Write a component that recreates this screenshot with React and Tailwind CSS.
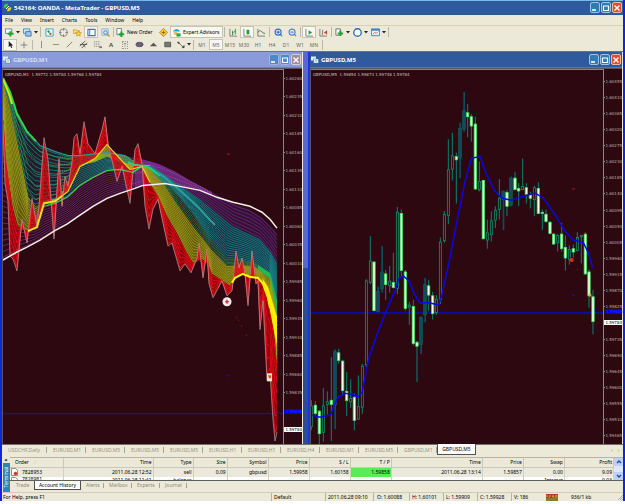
import React from "react";
import { Plus, Crosshair, Star, ZoomIn, ZoomOut, Clock } from "lucide-react";

/* ---------- curve helpers ---------- */
const at = (pts, x) => {
  if (x <= pts[0][0]) return pts[0][1];
  for (let i = 1; i < pts.length; i++) {
    if (x <= pts[i][0]) {
      const [x0, y0] = pts[i - 1];
      const [x1, y1] = pts[i];
      return y0 + ((y1 - y0) * (x - x0)) / (x1 - x0);
    }
  }
  return pts[pts.length - 1][1];
};
const blend = (a, b, t, from, to) => {
  const out = [];
  for (let x = from; x <= to; x++) {
    out.push(`${x},${(at(a, x) * (1 - t) + at(b, x) * t).toFixed(1)}`);
  }
  return out.join(" ");
};
const area = (a, b, from, to) =>
  blend(a, a, 0, from, to) + " " + blend(b, b, 0, from, to).split(" ").reverse().join(" ");
const line = (pts) => pts.map((p) => p.join(",")).join(" ");

/* ---------- M1 data ---------- */
const PRICE = [[3,122],[5,182],[8,200],[10,255],[13,258],[17,270],[22,218],[27,242],[32,197],[37,225],[39,205],[44,136],[48,158],[54,238],[59,157],[62,205],[65,175],[68,185],[72,160],[74,136],[77,132],[80,152],[84,120],[88,142],[95,152],[99,138],[102,128],[105,115],[108,142],[117,180],[122,165],[130,202],[135,148],[138,142],[142,162],[145,205],[149,228],[153,208],[158,198],[163,222],[168,245],[172,242],[180,270],[185,263],[191,272],[197,257],[199,242],[203,277],[207,248],[209,283],[213,297],[222,280],[227,295],[232,290],[236,250],[239,267],[242,257],[245,273],[248,305],[252,250],[256,283],[258,280],[260,329],[263,300],[267,380],[270,373],[273,420],[275,441],[277,432]];
const YELLOW = [[3,118],[6,160],[9,182],[13,208],[18,226],[28,230],[37,226],[44,202],[55,200],[68,190],[80,165],[95,157],[107,143],[118,155],[130,168],[142,165],[152,185],[158,195],[167,215],[177,232],[187,252],[193,262],[202,258],[208,263],[212,273],[220,278],[230,285],[235,277],[243,273],[250,276],[258,277],[263,283],[268,297],[272,317],[275,340],[277,365]];
const GREEN = [[3,80],[8,98],[14,125],[20,155],[28,195],[36,205],[44,200],[55,198],[68,184],[80,163],[95,160],[107,155],[125,162],[140,163],[150,168],[163,182],[175,200],[193,225],[210,247],[227,265],[240,264],[255,266],[270,278],[277,315]];
const TOP = [[3,76],[10,90],[17,112],[27,130],[40,144],[55,150],[68,154],[80,154],[107,151],[125,154],[140,163],[150,168],[165,180],[180,196],[195,215],[210,238],[227,258],[240,258],[255,262],[270,272],[277,300]];
const TEAL = [[3,185],[20,198],[35,210],[44,205],[55,202],[67,196],[80,184],[93,176],[107,169],[120,168],[133,171],[143,164],[150,164],[162,172],[175,181],[200,198],[217,212],[233,225],[260,238],[270,250],[277,262]];
const UPPER = [[118,153],[135,156],[150,160],[160,163],[175,170],[190,179],[205,187],[220,195],[235,203],[250,208],[262,216],[270,224],[277,232]];
const WHITE = [[3,259],[17,251],[27,246],[40,239],[54,230],[67,223],[80,214],[93,205],[107,197],[120,192],[135,187],[143,184],[165,182],[180,185],[200,189],[217,196],[233,201],[250,205],[262,211],[270,218],[277,227]];

function Band({ a, b, n, color, from = 3, to = 277, width = 0.8, dash }) {
  return (
    <g stroke={color} strokeWidth={width} strokeDasharray={dash} fill="none">
      {Array.from({ length: n }, (_, i) => (
        <polyline key={i} points={blend(a, b, (i + 0.5) / n, from, to)} />
      ))}
    </g>
  );
}

function RainbowPlot() {
  return (
    <svg viewBox="3 68 280 376" preserveAspectRatio="none" className="block h-full w-full">
      <rect x="3" y="413" width="280" height="1" fill="#23204e" />
      <Band a={TEAL} b={WHITE} n={13} color="#6a2c7c" to={165} width={0.8} />
      <polygon points={area(UPPER, TEAL, 150, 277)} fill="#401650" opacity="0.55" />
      <Band a={UPPER} b={TEAL} n={7} color="#70308a" from={118} width={0.7} />
      <polygon points={area(UPPER, WHITE, 135, 212)} fill="#8a3a9c" opacity="0.45" />
      <Band a={UPPER} b={WHITE} n={3} color="#a044b0" from={125} to={212} width={0.8} dash="1.5 1" />
      <polygon points={area(TOP, TEAL, 150, 277)} fill="#0c4456" opacity="0.7" />
      <polygon points={area(TOP, TEAL, 20, 150)} fill="#0c4650" opacity="0.35" />
      <Band a={TOP} b={TEAL} n={15} color="#1d8088" width={0.8} />
      <Band a={TOP} b={GREEN} n={5} color="#25a060" width={0.7} />
      <polygon points={area(TOP, GREEN, 258, 277)} fill="#20b858" />
      <polygon points={area(YELLOW, GREEN, 3, 30)} fill="#707008" opacity="0.75" />
      <polygon points={area(YELLOW, GREEN, 142, 277)} fill="#7c7c0c" opacity="0.7" />
      <Band a={YELLOW} b={GREEN} n={12} color="#a9a81a" width={0.7} />
      <Band a={YELLOW} b={TOP} n={6} color="#c08a28" from={60} to={145} width={0.7} dash="1 1" />
      <polygon points={area(PRICE, YELLOW, 3, 277)} fill="#c40008" opacity="0.68" />
      <Band a={PRICE} b={YELLOW} n={6} color="#e8101a" width={0.8} />
      <polyline points={line(PRICE)} stroke="#a89c9c" strokeWidth="0.7" fill="none" />
      <polyline points={blend(TEAL, TEAL, 0, 44, 150)} stroke="#40d840" strokeWidth="1.2" fill="none" />
      <polyline points={blend(TOP, TOP, 0, 3, 36)} stroke="#30d850" strokeWidth="2" fill="none" />
      <polyline points={blend(TOP, GREEN, 0.3, 3, 12)} stroke="#c8e818" strokeWidth="2" fill="none" />
      <polyline points={blend(TOP, TOP, 0, 36, 130)} stroke="#2a9a9a" strokeWidth="1.2" fill="none" />
      <polyline points={blend(TOP, TEAL, 0.35, 128, 160)} stroke="#25d080" strokeWidth="2" fill="none" />
      <polyline points={blend(TOP, TEAL, 0.6, 158, 215)} stroke="#2aa098" strokeWidth="2" fill="none" />
      <polyline points={blend(YELLOW, YELLOW, 0, 28, 62)} stroke="#e8e020" strokeWidth="2" fill="none" />
      <polyline points={blend(YELLOW, YELLOW, 0, 62, 150)} stroke="#d8d820" strokeWidth="1.2" fill="none" />
      <polyline points={blend(YELLOW, YELLOW, 0, 232, 270)} stroke="#ffff00" strokeWidth="2" fill="none" />
      <polygon points="262,277 268,286 277,316 277,345 272,320 268,300" fill="#ffee00" />
      <polyline points={line(WHITE)} stroke="#f4f0e8" strokeWidth="1.5" fill="none" />
      <circle cx="227" cy="301" r="4.5" fill="#f2ece8" />
      <path d="M225 301h4M227 299v4" stroke="#d01020" strokeWidth="1.2" />
      <rect x="267" y="373" width="5" height="8" fill="#f2e8d8" />
      <path d="M268 375h3v3h-2z" fill="#e05010" />
      <g fill="#a02020">
        <rect x="227" y="152" width="3" height="1" />
        <rect x="236" y="316" width="1" height="1" />
        <rect x="238" y="319" width="1" height="1" />
        <rect x="241" y="325" width="1" height="1" />
        <rect x="246" y="334" width="1" height="1" />
      </g>
      <rect x="227" y="375" width="2" height="1" fill="#1010d0" />
    </svg>
  );
}

/* ---------- M5 data: x, high, low, body top, body bottom, kind (all x3) ---------- */
const CANDLES = [
  [19,1005,1095,1022,1085,"h"],[31,1008,1050,1020,1045,"w"],[43,1035,1138,1038,1106,"w"],[55,968,1130,1022,1102,"h"],
  [67,978,1048,1010,1018,"h"],[79,875,1128,1005,1018,"w"],[90,852,1092,858,1020,"t"],[101,850,895,862,885,"w"],
  [113,883,992,887,976,"w"],[125,920,1052,978,1006,"w"],[137,942,1028,1000,1010,"h"],[148,985,1096,996,1066,"w"],
  [160,930,1064,1024,1062,"h"],[172,895,1046,902,1026,"h"],[184,640,905,645,898,"h"],[196,510,655,585,650,"h"],
  [207,587,735,588,735,"w"],[219,662,740,676,738,"t"],[231,540,680,618,670,"t"],[242,612,702,624,656,"w"],
  [254,600,680,646,660,"h"],[265,560,668,650,665,"w"],[277,422,685,438,668,"h"],[289,430,636,442,614,"w"],
  [301,612,735,618,728,"w"],[313,708,778,718,724,"h"],[325,702,840,722,834,"w"],[336,826,950,830,842,"w"],
  [348,752,866,755,838,"t"],[360,636,770,656,748,"t"],[371,642,736,660,688,"w"],[383,678,762,690,744,"w"],
  [394,688,748,700,740,"h"],[406,514,715,528,702,"h"],[418,434,530,445,524,"h"],[430,218,474,310,448,"h"],
  [442,198,342,268,308,"h"],[454,258,412,270,280,"w"],[465,168,335,185,275,"t"],[477,75,195,132,188,"t"],
  [488,112,212,138,150,"w"],[499,142,225,150,178,"w"],[511,150,370,172,368,"w"],[523,285,375,345,370,"h"],
  [535,340,520,342,518,"w"],[547,460,548,500,522,"h"],[559,435,526,464,506,"h"],[571,420,486,432,462,"h"],
  [583,338,460,396,430,"h"],[595,372,492,376,400,"t"],[606,370,450,378,420,"w"],[618,330,420,336,418,"t"],
  [630,316,370,335,370,"w"],[641,350,420,366,374,"w"],[653,276,372,360,370,"h"],[664,350,412,364,384,"w"],
  [676,376,426,386,396,"w"],[688,358,450,364,400,"h"],[700,348,444,366,442,"w"],[712,430,492,438,442,"w"],
  [723,430,470,444,466,"w"],[735,465,505,468,502,"w"],[746,500,535,504,534,"w"],[758,504,556,508,530,"h"],
  [770,470,556,504,548,"w"],[781,508,614,544,576,"w"],[793,538,596,550,580,"h"],[805,535,575,548,558,"w"],
  [817,498,556,514,554,"h"],[829,508,592,508,512,"h"],[841,498,628,504,624,"w"],[852,610,726,618,690,"w"],
  [864,672,806,693,768,"w"],
];
const AVERAGE = "22,1050 45,1056 78,1048 88,1018 100,995 120,984 145,988 158,996 172,980 180,935 192,875 215,810 240,745 272,670 280,640 295,630 312,645 328,685 345,712 370,710 400,718 410,690 430,600 455,470 480,345 500,275 525,270 545,325 570,375 590,395 620,402 655,390 690,380 715,395 750,445 780,495 805,522 835,530 850,560 863,605";

function CandlePlot() {
  return (
    <svg viewBox="18 9 876 1128" preserveAspectRatio="none" className="block h-full w-full">
      <path d="M18 742H894" stroke="#0808d0" strokeWidth="4" />
      {CANDLES.map(([x, hi, lo, top, bot, kind]) => (
        <g key={x}>
          <rect x={kind === "t" ? x - 2 : x - 1.5} y={hi} width={kind === "t" ? 5 : 3} height={lo - hi} fill={kind === "t" ? "#0c4c60" : "#0a8072"} />
          {kind === "t" && <rect x={x - 5} y={top} width="10" height={bot - top} fill="#0c4c60" stroke="#1b6a4c" strokeWidth="1" />}
          {kind === "h" && <rect x={x - 3} y={top} width="6" height={bot - top} fill="#2e0810" stroke="#12946c" strokeWidth="2.4" />}
          {kind === "w" && <rect x={x - 3.5} y={top} width="7" height={bot - top} fill="#f4fff0" stroke="#3fe05c" strokeWidth="2.4" />}
        </g>
      ))}
      <polyline points={AVERAGE} stroke="#0808e8" strokeWidth="4.5" fill="none" />
      <circle cx="800" cy="582" r="6" fill="#d83018" />
      <rect x="851" y="684" width="8" height="8" fill="#f0a050" />
      <rect x="801" y="366" width="9" height="3" fill="#902020" />
      <rect x="801" y="687" width="9" height="3" fill="#1010d0" />
      <rect x="816" y="609" width="3" height="3" fill="#902020" />
    </svg>
  );
}

/* ---------- windows ---------- */
function CaptionButtons({ dim }) {
  const base = "flex h-[11px] w-[10px] items-center justify-center rounded-[2px] border";
  const blue = dim ? "border-[#9cb4e8] bg-[#4f86c4]" : "border-[#9cc4ec] bg-[#2f7cb0]";
  return (
    <div className="flex gap-px">
      <button aria-label="Minimize" className={`${base} ${blue}`}>
        <svg viewBox="0 0 8 8" className="h-2 w-2"><path d="M1 6h4" stroke="#fff" strokeWidth="1.6" /></svg>
      </button>
      <button aria-label="Restore" className={`${base} ${blue}`}>
        <svg viewBox="0 0 8 8" className="h-2 w-2"><path d="M1 2h6M1.5 2v4.5h5V2" stroke="#fff" strokeWidth="1.2" fill="none" /></svg>
      </button>
      <button aria-label="Close" className={`${base} ${dim ? "border-[#d8cfd0] bg-[#9c8c94]" : "border-[#f0b8a0] bg-[#dc5028]"}`}>
        <svg viewBox="0 0 8 8" className="h-2 w-2"><path d="M1.5 1.5l5 5M6.5 1.5l-5 5" stroke="#fff" strokeWidth="1.4" /></svg>
      </button>
    </div>
  );
}

function ChartIcon() {
  return (
    <svg viewBox="0 0 8 8" className="h-2 w-2">
      <path d="M0 .5h5v4H0z" fill="#dcecff" />
      <path d="M2.5 3h5v4h-5z" fill="#fff" stroke="#3a78b8" strokeWidth=".6" />
      <path d="M3.5 5.8l1-1.2 1 .6 1-1.2" stroke="#2a8a60" strokeWidth=".6" fill="none" />
    </svg>
  );
}

const TONES = { bid: "bg-white text-black", line: "bg-[#0000e0] text-[#3030ff]" };

function ChartWindow({ title, dim, info, labels, tones, axisPad, badge, children }) {
  return (
    <section className="flex h-full min-w-0 flex-1 flex-col">
      <header className={`flex h-[16px] shrink-0 items-center gap-[2px] border-b pr-px pl-px ${dim ? "border-[#7480b8] bg-[#8b9ada] text-[#cfe0f8]" : "border-[#5878a0] bg-[#2f5a9e] text-white"}`}>
        <ChartIcon />
        <h2 className="flex-1 text-[6px] leading-[8px] font-bold">{title}</h2>
        <CaptionButtons dim={dim} />
      </header>
      <div className="flex min-h-0 flex-1 border-t border-l border-[#5c5458] bg-[#2e0810]">
        <div className="relative min-w-0 flex-1 border-t border-[#8c8488]">
          {children}
          <p className="absolute top-[2px] left-[2px] font-['DejaVu_Sans'] text-[4px] leading-[5px] whitespace-pre text-[#c8c0c0]">{info}</p>
        </div>
        <ol className={`relative flex w-[19px] shrink-0 flex-col border-l border-[#8c8488] font-['DejaVu_Sans'] text-[4px] leading-[5px] text-[#b8b0b0] ${axisPad}`}>
          {labels.map((l) => (
            <li key={l} className="flex min-h-0 flex-1 items-center">
              <span className="h-px w-px bg-[#8c8488]" />
              <span className={`flex-1 pl-px ${tones[l] ? TONES[tones[l]] : ""}`}>{l}</span>
            </li>
          ))}
          {badge && <li className="absolute top-[64%] right-0 left-px h-[5px] bg-[#0000e0] pl-px text-[#3030ff]">{badge}</li>}
        </ol>
      </div>
    </section>
  );
}

const scale = (start, step, n) => Array.from({ length: n }, (_, i) => ((start - i * step) / 100000).toFixed(5));
const M1_LABELS = [...scale(160260, 25, 18), "1.59808", "1.59784"];
const M5_LABELS = scale(160455, 45, 23).map((l, i) => (i === 15 ? "1.59784" : l));

/* ---------- toolbars ---------- */
const Sep = () => <span className="mx-px h-[10px] w-px shrink-0 bg-[#bcb8a8]" />;

function Tool({ label, on, drop, children }) {
  return (
    <button
      aria-label={label}
      className={`flex h-[12px] shrink-0 items-center justify-center ${drop ? "w-[18px] gap-[2px]" : "w-[14px]"} ${on ? "border border-[#c8c4b4] bg-[#f8f7f2]" : ""}`}
    >
      {children}
      {drop && <svg viewBox="0 0 4 3" className="h-[3px] w-[4px]"><path d="M0 0h4L2 2.5z" fill="#222" /></svg>}
    </button>
  );
}
const Ico = ({ children }) => <svg viewBox="0 0 10 10" className="h-[9px] w-[9px]" fill="none">{children}</svg>;

function MainToolbar() {
  return (
    <div role="toolbar" aria-label="Standard" className="flex h-[13px] items-center border-t border-[#d8d2b0] pl-px">
      <Tool label="New chart" drop><Ico><path d="M.5 1h7v5h-7z" fill="#fff" stroke="#4888b0" /><path d="M6 3.5v6M3 6.5h6.5" stroke="#28a030" strokeWidth="2.2" /></Ico></Tool>
      <Tool label="Profiles" drop><Ico><path d="M.5 1h7v5h-7z" fill="#cfe4f8" stroke="#4888b8" /><path d="M3 4h6v5H3z" fill="#9cc8f0" stroke="#3878b0" /></Ico></Tool>
      <Sep />
      <Tool label="Market watch"><Ico><path d="M1 1h8v8H1z" fill="#eef8ff" stroke="#40a0b8" /><path d="M3 3l2 2" stroke="#20a040" strokeWidth="2" /><path d="M5 6l2 1" stroke="#d03828" strokeWidth="2" /></Ico></Tool>
      <Tool label="Data window"><Crosshair className="h-[9px] w-[9px] text-[#808080]" strokeWidth={2.5} /></Tool>
      <Tool label="Navigator"><Ico><path d="M.5 2h3l1 1H7v3H.5z" fill="#f8e080" stroke="#c89828" strokeWidth=".8" /><path d="M6 3l1 2 2.500.3-2 1.500.6 2.200L6 8 4 9l.5-2.200-2-1.500L5 5z" fill="#f8d040" stroke="#b88820" strokeWidth=".6" /></Ico></Tool>
      <Tool label="Terminal" on><Ico><path d="M1 1.5h8v7H1z" fill="#fff" stroke="#3878c8" strokeWidth="1.2" /><path d="M3 2v6" stroke="#3878c8" /></Ico></Tool>
      <Tool label="Strategy tester"><Ico><path d="M1 1h7v7H1z" fill="#dcecf8" stroke="#88b0d0" /><circle cx="5" cy="5" r="2" stroke="#3878c0" /><path d="M6.5 6.5l3 3" stroke="#c89830" strokeWidth="1.5" /></Ico></Tool>
      <Sep />
      <button className="flex h-[12px] w-[41px] shrink-0 items-center gap-[2px] pl-px text-black">
        <Ico><path d="M1 .5h5v7H1z" fill="#fff" stroke="#608070" /><path d="M6 4v6M3 7h6" stroke="#20a030" strokeWidth="2.2" /></Ico>
        <span className="whitespace-nowrap">New Order</span>
      </button>
      <Tool label="MetaEditor"><Ico><path d="M5 .5L9.5 5 5 9.5.5 5z" fill="#f8d048" stroke="#b88818" /><path d="M5 3v4M3 5h4" stroke="#8c6808" /></Ico></Tool>
      <button className="flex h-[12px] w-[53px] shrink-0 items-center gap-[2px] border border-[#c8c4b4] bg-[#f8f7f2] pl-px text-black">
        <Ico><path d="M1 4c2-4 6-4 8 0z" fill="#38a0c8" /><circle cx="4" cy="5.5" r="2.3" fill="#e8c060" /><path d="M5 6h4.5v3.5H5z" fill="#28a838" /></Ico>
        <span className="whitespace-nowrap">Expert Advisors</span>
      </button>
      <Sep />
      <Tool label="Bar chart"><Ico><path d="M1 1v8h8" stroke="#777" /><path d="M4 3v5M7 1v6M4 5h1M6 4h1" stroke="#208838" /></Ico></Tool>
      <Tool label="Candlesticks" on><Ico><path d="M1 1v8h8" stroke="#777" /><path d="M5.5 2v5" stroke="#18a030" strokeWidth="3" /></Ico></Tool>
      <Tool label="Line chart"><Ico><path d="M1 1v8h8" stroke="#777" /><path d="M1 5c3-5 4 1 8 1" stroke="#407048" /></Ico></Tool>
      <Sep />
      <Tool label="Zoom in"><ZoomIn className="h-[9px] w-[9px] text-[#3070c8]" strokeWidth={3} /></Tool>
      <Tool label="Zoom out"><ZoomOut className="h-[9px] w-[9px] text-[#5888c8]" strokeWidth={3} /></Tool>
      <Sep />
      <Tool label="Auto scroll" on><Ico><path d="M1 1v8h8" stroke="#777" /><path d="M4 2.5l4 2.5-4 2.5z" fill="#18a030" /></Ico></Tool>
      <Tool label="Chart shift"><Ico><path d="M1 1v8h8M4 2v6" stroke="#777" /><path d="M9 2.5L5.5 5 9 7.5z" fill="#c84828" /></Ico></Tool>
      <Sep />
      <Tool label="Indicators" drop><Ico><path d="M1 1h5v7H1z" fill="#fff" stroke="#607060" /><path d="M6 3v6M3 6h6" stroke="#28a030" strokeWidth="2.2" /></Ico></Tool>
      <Tool label="Periods" drop><Clock className="h-[9px] w-[9px] fill-white text-[#2868b0]" strokeWidth={3.5} /></Tool>
      <Tool label="Templates" drop><Ico><path d="M.5 1h9v7.5h-9z" fill="#e8f2ff" stroke="#4880b8" /><path d="M.5 2h9" stroke="#4880b8" strokeWidth="2" /><path d="M2 7l2-2 2 1 2-2" stroke="#c07030" /></Ico></Tool>
      <Sep />
    </div>
  );
}

function LineToolbar() {
  return (
    <div role="toolbar" aria-label="Line studies" className="flex h-[13px] items-center pl-px">
      <Tool label="Cursor" on><Ico><path d="M3 1v7l1.5-1.5L6 9l1-.5L6 6h2z" fill="#222" /></Ico></Tool>
      <Tool label="Crosshair"><Plus className="h-[10px] w-[10px] text-[#777]" strokeWidth={2} /></Tool>
      <Sep />
      <Tool label="Vertical line"><Ico><path d="M5 1v8" stroke="#888" /></Ico></Tool>
      <Tool label="Horizontal line"><Ico><path d="M2 5h7" stroke="#888" /></Ico></Tool>
      <Tool label="Trendline"><Ico><path d="M2 8l6-6" stroke="#777" /></Ico></Tool>
      <Tool label="Channel"><Ico><path d="M1 7l6-6M3 9l6-6M3 3l4 5M1 5h8" stroke="#555" /></Ico></Tool>
      <Tool label="Fibonacci"><Ico><path d="M1 2h7M1 4.5h7M1 7h7" stroke="#888" strokeDasharray="1.5 .7" /><path d="M7 7h3v2H7z" fill="#777" /></Ico></Tool>
      <Tool label="Text"><span className="text-[6px] font-bold text-[#555]">A</span></Tool>
      <Tool label="Text label"><span className="border border-dotted border-[#999] px-px text-[5px] leading-[6px] text-[#666]">T</span></Tool>
      <Tool label="Ellipse"><Ico><ellipse cx="5" cy="5" rx="4" ry="2.5" fill="#6a607c" stroke="#555" /></Ico></Tool>
      <Tool label="Triangle"><Ico><path d="M5 3l4 4H1z" fill="#555" /></Ico></Tool>
      <Tool label="Rectangle"><Ico><path d="M2 2.5h6.5v5H2z" fill="#777" stroke="#555" /></Ico></Tool>
      <Tool label="Arrows" drop><Ico><path d="M1.5 2.5h2v2zM4 4l4 4M7 8.500h2V6z" fill="#444" stroke="#444" strokeWidth=".8" /></Ico></Tool>
      <Sep />
      {["M1", "M5", "M15", "M30", "H1", "H4", "D1", "W1", "MN"].map((p) => (
        <button key={p} className={`h-[11px] w-[14px] shrink-0 text-[5px] text-[#666] ${p === "M5" ? "border border-[#c8c4b4] bg-[#f8f7f2]" : ""}`}>{p}</button>
      ))}
      <Sep />
    </div>
  );
}

/* ---------- terminal ---------- */
const COLS = [
  ["Order", 53], ["Time", 90], ["Type", 40], ["Size", 34], ["Symbol", 41], ["Price", 41],
  ["S / L", 41], ["T / P", 41], ["Time", 91], ["Price", 41], ["Swap", 41], ["Profit", 49],
];
const ROWS = [
  ["7828953", "2011.06.28 12:52", "sell", "0.09", "gbpusd", "1.59958", "1.60158", "1.59858", "2011.06.28 13:14", "1.59857", "0.00", "9.09"],
  ["7828981", "2011.06.28 11:41", "balance", "", "", "", "", "", "", "", "Interest", "0.03"],
];

function Terminal() {
  return (
    <div className="flex h-[35px] shrink-0">
      <div className="flex w-[8px] shrink-0 flex-col items-center">
        <button aria-label="Close terminal" className="h-[6px] text-[6px] leading-[6px] font-bold text-black">×</button>
        <div className="flex min-h-0 w-[7px] flex-1 items-center justify-center overflow-hidden bg-[#2c86b4]">
          <span className="rotate-180 text-[5px] leading-[6px] text-white [writing-mode:vertical-rl]">Terminal</span>
        </div>
      </div>
      <div className="flex min-w-0 flex-1 flex-col">
        <div className="flex h-[23px] border-t border-[#b8b4a4]">
          <div className="min-w-0 flex-1 overflow-hidden bg-white">
            <table className="w-full table-fixed border-collapse text-right text-[5px] leading-[8px] text-black">
              <colgroup>{COLS.map(([, w], i) => <col key={i} style={{ width: `${(w / 603) * 100}%` }} />)}</colgroup>
              <thead>
                <tr className="bg-[#ece9d8]">
                  {COLS.map(([n], i) => (
                    <th key={i} className={`h-[9px] border-r border-b border-[#ccc8b8] p-0 font-normal ${i === 0 ? "pl-[5px] text-left" : "pr-px"}`}>
                      {n}{i === 0 && <span className="ml-[6px] text-[#aaa]">∕</span>}
                    </th>
                  ))}
                </tr>
              </thead>
              <tbody>
                {ROWS.map((r, ri) => (
                  <tr key={ri} className={ri === 0 ? "bg-[#ebe8dc] leading-[9px]" : "bg-white leading-[5px]"}>
                    {r.map((c, i) => (
                      <td key={i} className={`border-r border-[#d4d0c0] p-0 ${i === 0 ? "text-left" : "pr-px"} ${ri === 0 && i === 7 ? "bg-[#58ec58]" : ""}`}>
                        {i === 0 ? (
                          <span className="flex items-start gap-[4px] pl-px">
                            <svg viewBox="0 0 7 8" className="h-[8px] w-[7px]"><path d="M.5.5h4l2 2v5h-6z" fill="#fff" stroke="#777" strokeWidth=".8" /><circle cx="4.5" cy="5.5" r="1.8" fill="#d83828" /></svg>
                            {c}
                          </span>
                        ) : c}
                      </td>
                    ))}
                  </tr>
                ))}
              </tbody>
            </table>
          </div>
          <div className="flex w-[9px] shrink-0 flex-col justify-between bg-[#dce8f8]">
            <button aria-label="Scroll up" className="flex h-[8px] items-center justify-center bg-[#bcd0f8]"><svg viewBox="0 0 6 4" className="h-[4px] w-[6px]"><path d="M1 3l2-2 2 2" stroke="#2848a0" strokeWidth="1.3" fill="none" /></svg></button>
            <button aria-label="Scroll down" className="flex h-[8px] items-center justify-center bg-[#bcd0f8]"><svg viewBox="0 0 6 4" className="h-[4px] w-[6px]"><path d="M1 1l2 2 2-2" stroke="#2848a0" strokeWidth="1.3" fill="none" /></svg></button>
          </div>
        </div>
        <nav className="flex h-[12px] items-start border-t border-[#606060] pl-[6px] text-[5px] leading-[9px] text-[#8c8878]">
          <button className="w-[18px] text-left">Trade</button>
          <button className="h-[9px] w-[47px] border-x border-b border-[#505050] bg-white leading-[8px] text-black">Account History</button>
          {[["Alerts", "w-[23px]"], ["Mailbox", "w-[28px]"], ["Experts", "w-[28px]"], ["Journal", "w-[27px]"]].map(([t, w]) => (
            <button key={t} className={`${w} flex h-[9px] items-center justify-between pl-[5px] text-left`}>
              {t}<span className="h-[5px] w-px bg-[#a8a494]" />
            </button>
          ))}
        </nav>
      </div>
    </div>
  );
}

const TABS = ["USDCHF,Daily", "EURUSD,M1", "EURUSD,M5", "EURUSD,M5", "EURUSD,M5", "EURUSD,H1", "EURUSD,H1", "EURUSD,H4", "EURUSD,M1", "EURUSD,M5", "GBPUSD,M1", "GBPUSD,M5"];
const tabShape = (i) => {
  if (i === TABS.length - 1) return "-mt-px h-[11px] justify-center border-x border-b border-[#505050] bg-white text-black";
  return i === 0 ? "h-[10px] justify-between" : "h-[10px] justify-between pl-[6px]";
};

export default function App() {
  return (
    <div className="flex h-screen flex-col overflow-hidden bg-white font-['Noto_Sans','Liberation_Sans',sans-serif] text-[5px] leading-[8px]">
      <div className="mb-[3px] flex min-h-0 flex-1 flex-col border-r-2 border-l-2 border-[#1424d8] bg-[#ece9d8]">
        <header className="flex h-[15px] shrink-0 items-center gap-[2px] border-t border-b border-t-[#78b8e8] border-b-[#28588c] bg-[#2f5a9e] pr-px pl-px text-white">
          <svg viewBox="0 0 9 9" className="h-[9px] w-[9px]"><path d="M1 5C0 2 3 0 5 1L4 4z" fill="#48c848" /><path d="M8 4c1 3-2 5-4 4l1-3z" fill="#e8c830" /><path d="M3 6l3-3" stroke="#fff" /></svg>
          <h1 className="flex-1 text-[6px] leading-[8px] font-bold">542164: OANDA - MetaTrader - GBPUSD,M5</h1>
          <CaptionButtons />
        </header>
        <nav className="flex h-[10px] shrink-0 items-center gap-[8px] pl-[3px] text-black">
          {["File", "View", "Insert", "Charts", "Tools", "Window", "Help"].map((m) => <button key={m}>{m}</button>)}
        </nav>
        <MainToolbar />
        <LineToolbar />
        <main className="flex min-h-0 flex-1 border-t border-[#68747c] bg-[#2f5a9e]">
          <div className="flex min-w-0 [flex:300_1_0%]">
            <ChartWindow
              title="GBPUSD,M1" dim
              info="GBPUSD,M1  1.59772 1.59784 1.59768 1.59784"
              labels={M1_LABELS} axisPad="pb-[5px]"
              tones={{ "1.59808": "line", "1.59784": "bid" }}
            >
              <RainbowPlot />
            </ChartWindow>
          </div>
          <div className="flex w-[8px] shrink-0 flex-col border-l border-[#f0ece0]">
            <div className="flex-[216] border-r-2 border-[#1c34d8] bg-[#5868d0]" />
            <div className="flex-[176] border-r-2 border-[#1c34d8] bg-[#2c4c98]" />
          </div>
          <div className="flex min-w-0 border-r border-[#e8e4d8] [flex:312_1_0%]">
            <ChartWindow
              title="GBPUSD,M5"
              info="GBPUSD,M5  1.59854 1.59873 1.59748 1.59784"
              labels={M5_LABELS} axisPad="pt-[4px]"
              tones={{ "1.59784": "bid" }} badge="1.59808"
            >
              <CandlePlot />
            </ChartWindow>
          </div>
        </main>
        <nav className="flex h-[13px] shrink-0 items-start border-t border-[#707070] pl-[6px] text-[5px] text-[#98947f]">
          {TABS.map((t, i) => (
            <button key={i} className={`flex w-[39px] shrink-0 items-center whitespace-nowrap ${tabShape(i)}`}>
              {t}{i < TABS.length - 1 && <span className="h-[6px] w-px bg-[#a8a494]" />}
            </button>
          ))}
          <span className="flex h-[10px] flex-1 items-center justify-end gap-[5px] pr-[4px] text-[#8c8878]"><span>‹</span><span>›</span></span>
        </nav>
        <Terminal />
        <footer className="flex h-[9px] shrink-0 items-center border-t border-[#d0ccbc] text-[5px] text-black">
          <span className="flex-1 pl-px">For Help, press F1</span>
          <span className="w-[54px] border-l border-[#b8b4a4] pl-[2px]">Default</span>
          <span className="w-[48px] border-l border-[#b8b4a4] pl-[2px]">2011.06.28 09:10</span>
          <span className="w-[36px] border-l border-[#b8b4a4] pl-[3px]">O: 1.60088</span>
          <span className="w-[34px] border-l border-[#b8b4a4] pl-[2px]">H: 1.60101</span>
          <span className="w-[34px] border-l border-[#b8b4a4] pl-[2px]">L: 1.59909</span>
          <span className="w-[34px] border-l border-[#b8b4a4] pl-[2px]">C: 1.59928</span>
          <span className="w-[35px] border-l border-[#b8b4a4] pl-[2px]">V: 186</span>
          <svg viewBox="0 0 12 7" className="h-[7px] w-[12px]"><path d="M0 0h12v7H0z" fill="#b83030" /><path d="M1 7V4M3 7V3M5 7V4M7 7V2M9 7V3M11 7V1" stroke="#60c040" /><path d="M0 2h12" stroke="#e8b838" strokeDasharray="2 1" /></svg>
          <span className="w-[60px] pl-[13px]">936/1 kb</span>
          <svg viewBox="0 0 5 5" className="h-[5px] w-[5px]"><path d="M0 5l5-5M2 5l3-3M4 5l1-1" stroke="#a8a494" strokeWidth=".8" /></svg>
        </footer>
      </div>
    </div>
  );
}
